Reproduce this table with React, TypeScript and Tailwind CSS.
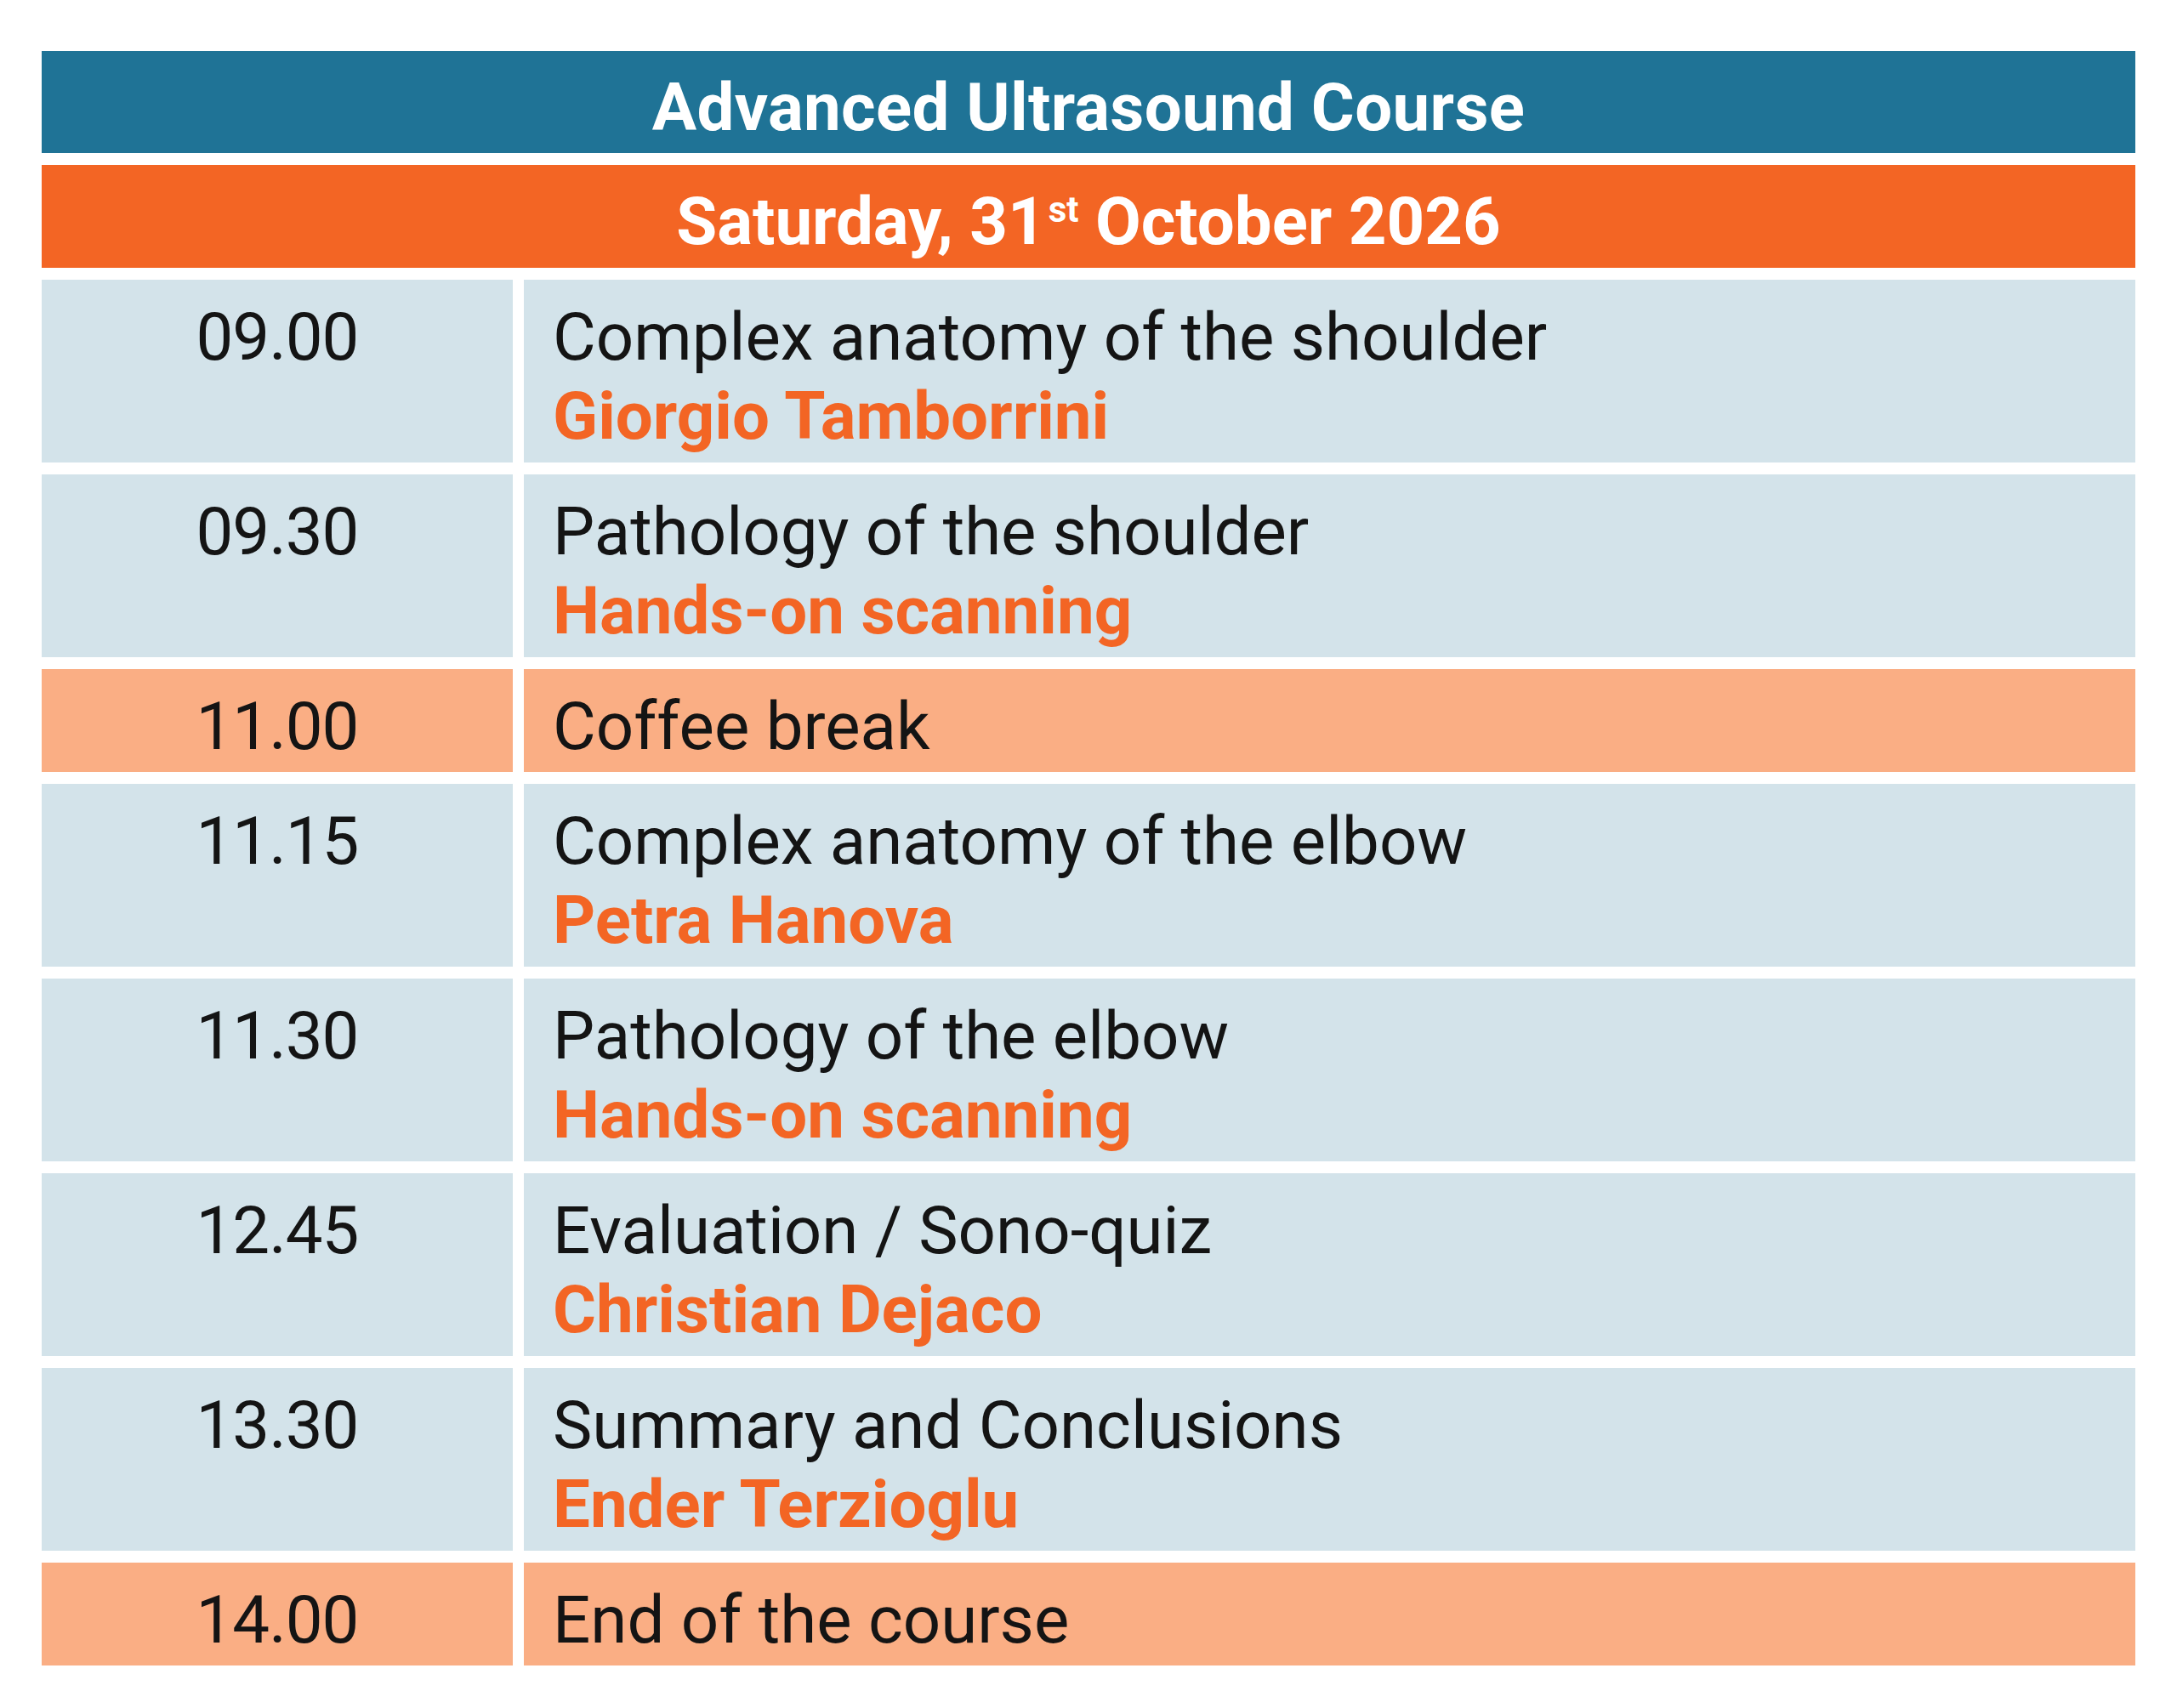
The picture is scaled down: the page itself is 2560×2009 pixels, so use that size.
const rows = [
  { time: '09.00', title: 'Complex anatomy of the shoulder', speaker: 'Giorgio Tamborrini' },
  { time: '09.30', title: 'Pathology of the shoulder', speaker: 'Hands-on scanning' },
  { time: '11.00', title: 'Coffee break', pause: true },
  { time: '11.15', title: 'Complex anatomy of the elbow', speaker: 'Petra Hanova' },
  { time: '11.30', title: 'Pathology of the elbow', speaker: 'Hands-on scanning' },
  { time: '12.45', title: 'Evaluation / Sono-quiz', speaker: 'Christian Dejaco' },
  { time: '13.30', title: 'Summary and Conclusions', speaker: 'Ender Terzioglu' },
  { time: '14.00', title: 'End of the course', pause: true },
];

export default function App() {
  return (
    <div
      className="min-h-screen bg-white px-[49px] pt-[60px] pb-[44px] text-[78px] leading-[93px] text-[#141414]"
      style={{ fontFamily: 'Roboto, "Liberation Sans", sans-serif' }}
    >
      <div className="flex flex-col gap-[14px]">
        <div className="h-[120px] bg-[#1f7396] pt-[20px] text-center font-bold tracking-[0.3px] text-white">
          Advanced Ultrasound Course
        </div>
        <div className="h-[121px] bg-[#f36524] pt-[20px] text-center font-bold text-white">
          Saturday, 31<span className="relative -top-[26px] ml-[3px] text-[42px] leading-none">st</span> October 2026
        </div>

        <div className="grid grid-cols-[554px_1fr] gap-x-[13px] gap-y-[14px]">
          {rows.map((row) => (
            <div key={row.time} className="contents">
              <div
                className={`pt-[21px] text-center tracking-[-1px] ${
                  row.pause ? 'h-[121px] bg-[#faae84]' : 'h-[215px] bg-[#d3e3ea]'
                }`}
              >
                {row.time}
              </div>
              <div
                className={`pt-[21px] pl-[34px] ${
                  row.pause ? 'h-[121px] bg-[#faae84]' : 'h-[215px] bg-[#d3e3ea]'
                }`}
              >
                <div>{row.title}</div>
                {row.speaker && <div className="font-bold text-[#f36524]">{row.speaker}</div>}
              </div>
            </div>
          ))}
        </div>
      </div>
    </div>
  );
}
